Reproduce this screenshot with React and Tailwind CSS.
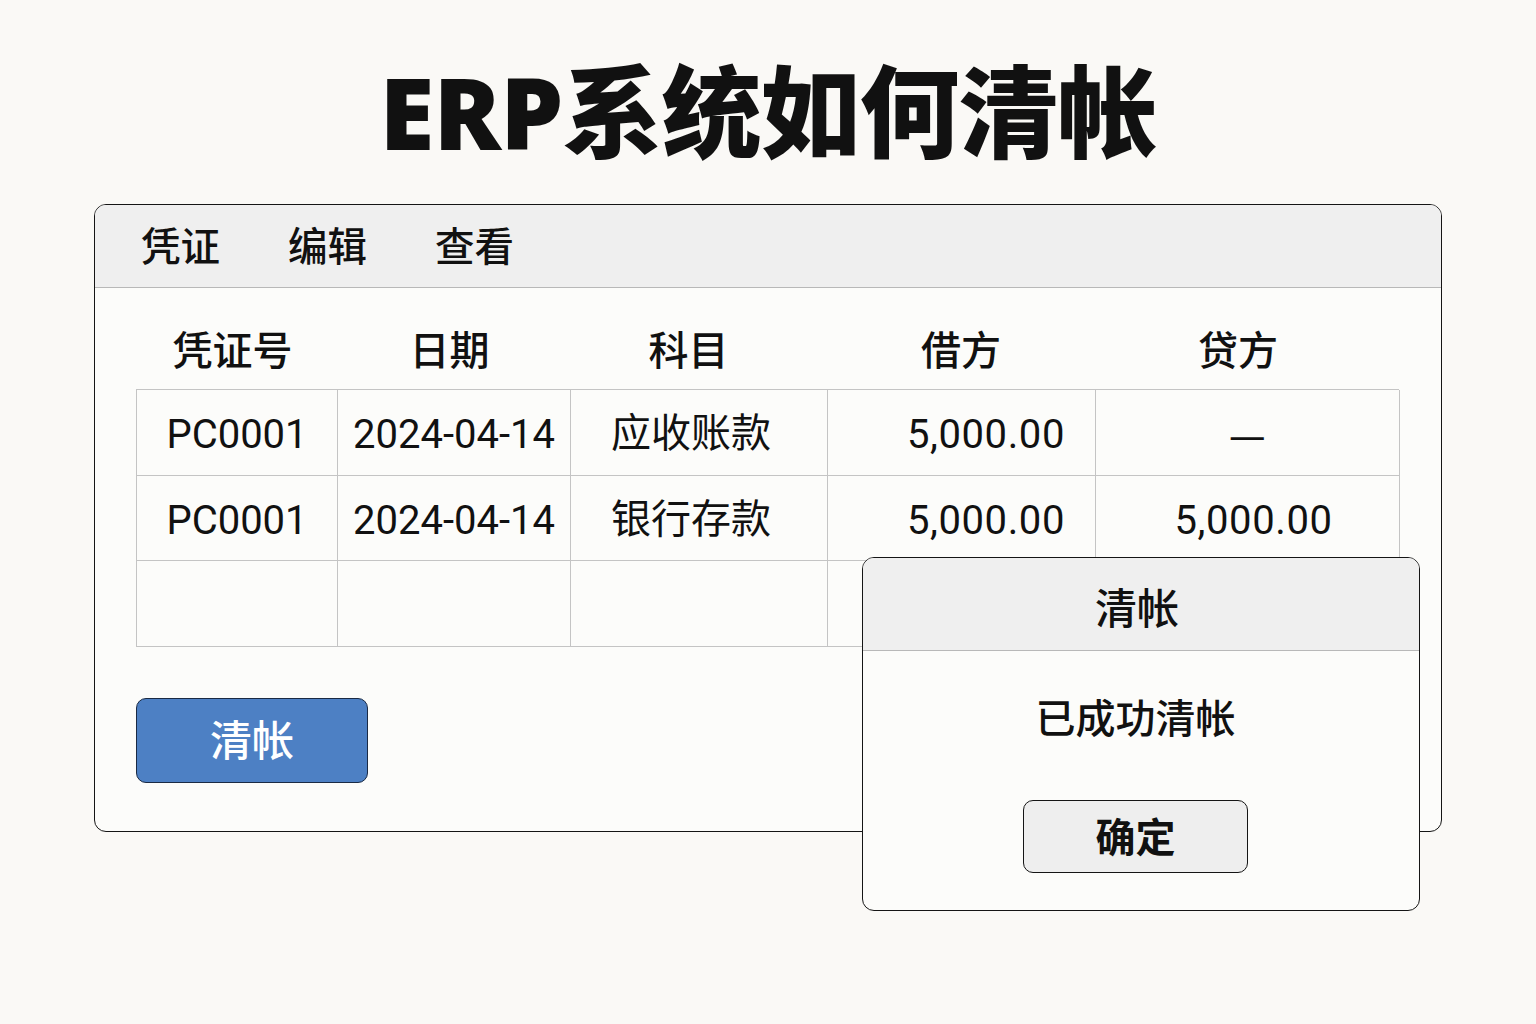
import React from "react";

const F = { fontFamily: '"Noto Sans", "Noto Sans CJK SC", sans-serif' };
const R = { fontFamily: 'Roboto, "Noto Sans CJK SC", sans-serif' };

const rows = [
  ["PC0001", "2024-04-14", "应收账款", "5,000.00", "—"],
  ["PC0001", "2024-04-14", "银行存款", "5,000.00", "5,000.00"],
  ["", "", "", "", ""],
];

export default function App() {
  return (
    <div
      className="w-[1536px] h-[1024px] bg-[#faf9f6] text-[#111] flex flex-col items-center"
      style={F}
    >
      <h1 className="mt-[52px] h-[118px] flex items-center text-[100px] font-black leading-none tracking-[-1px] text-[#111]">
        ERP系统如何清帐
      </h1>

      <div className="relative mt-[34px] w-[1348px] h-[628px] rounded-[12px] border-[1.5px] border-[#151515] bg-[#fcfcfa] flex flex-col">
        {/* menu bar */}
        <div className="h-[83px] rounded-t-[11px] bg-[#efefef] border-b border-[#b8b8b8] flex items-center pl-[46px] pt-[2px] gap-[68px] text-[39.5px] font-medium leading-none">
          <span>凭证</span>
          <span>编辑</span>
          <span>查看</span>
        </div>

        {/* content */}
        <div className="px-[41px] pt-[22px] flex flex-col">
          <div className="grid grid-cols-[201px_233px_257px_268px_304px] h-[79px] items-center text-[40px] font-medium leading-none">
            <div className="text-center pr-[8px]">凭证号</div>
            <div className="text-center pr-[8px]">日期</div>
            <div className="text-center pr-[20px]">科目</div>
            <div className="text-center">借方</div>
            <div className="text-center pr-[18px]">贷方</div>
          </div>

          <div className="border-l border-t border-[#c4c4c4] w-[1263px]" style={R}>
            {rows.map((r, i) => (
              <div
                key={i}
                className="grid grid-cols-[201px_233px_257px_268px_304px] h-[85.5px] text-[40px] leading-none"
              >
                <div className="border-r border-b border-[#c4c4c4] flex items-center justify-center pt-[6px]">
                  {r[0]}
                </div>
                <div className="border-r border-b border-[#c4c4c4] flex items-center justify-center pt-[6px]">
                  {r[1]}
                </div>
                <div className="border-r border-b border-[#c4c4c4] flex items-center pl-[40px]" style={F}>
                  {r[2]}
                </div>
                <div className="border-r border-b border-[#c4c4c4] flex items-center justify-end pr-[30px] pt-[6px] tracking-[0.6px]">
                  {r[3]}
                </div>
                <div className="border-r border-b border-[#c4c4c4] flex items-center justify-center pl-[12px] pt-[6px] tracking-[0.6px]">
                  {r[4] === "—" ? (
                    <span className="text-[36px] pr-[12px]" style={F}>—</span>
                  ) : (
                    r[4]
                  )}
                </div>
              </div>
            ))}
          </div>

          <button className="mt-[51px] w-[232px] h-[85px] rounded-[10px] border-[1.5px] border-[#1a2a44] bg-[#4d80c4] text-white text-[42px] font-medium leading-none flex items-center justify-center">
            清帐
          </button>
        </div>

        {/* dialog */}
        <div className="absolute left-[767px] top-[352px] w-[558px] h-[354px] rounded-[12px] border-[1.5px] border-[#151515] bg-[#fcfcfa] flex flex-col">
          <div className="h-[93px] rounded-t-[11px] bg-[#efefef] border-b border-[#b8b8b8] flex items-center justify-center pr-[8px] pt-[8px] text-[42px] font-medium leading-none">
            清帐
          </div>
          <div className="flex flex-col items-center pr-[11px]">
            <div className="mt-[47px] text-[40px] leading-none font-medium">已成功清帐</div>
            <button className="mt-[62px] w-[225px] h-[73px] rounded-[10px] border-[1.5px] border-[#151515] bg-[#eeeeee] text-[40px] font-bold leading-none flex items-center justify-center">
              确定
            </button>
          </div>
        </div>
      </div>
    </div>
  );
}
